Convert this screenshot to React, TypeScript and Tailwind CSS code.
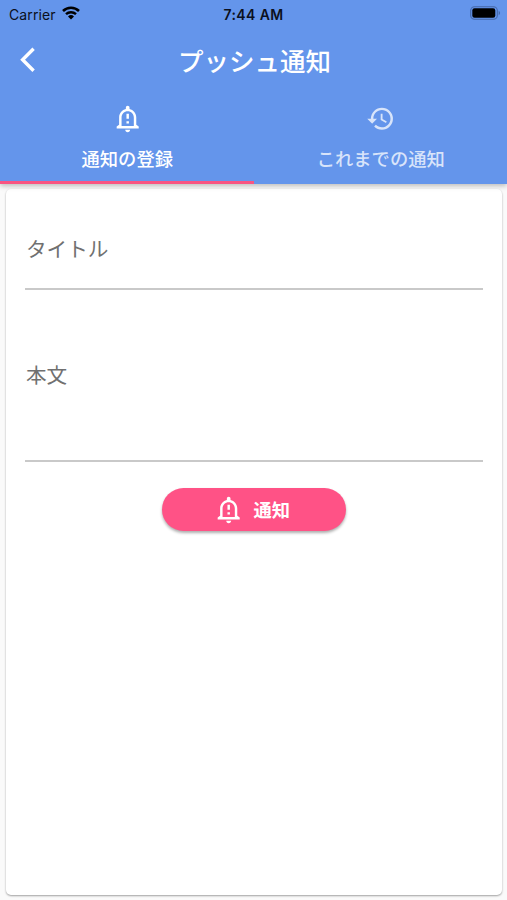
function BellAlertIcon() {
  return (
    <svg viewBox="0 0 24 24" className="size-[29.4px] shrink-0" fill="currentColor">
      <path
        fillRule="evenodd"
        d="M12 23c1.1 0 1.99-.89 1.99-1.99h-3.98c0 1.1.89 1.99 1.99 1.99zM19 17v-6c0-3.35-2.36-6.15-5.5-6.83V3c0-.83-.67-1.5-1.5-1.5s-1.5.67-1.5 1.5v1.17C7.36 4.85 5 7.65 5 11v6l-2 1.4V20h18v-1.6zM17 18H7v-7c0-2.76 2.24-5 5-5s5 2.24 5 5zM11 8h2v4h-2zM11 14h2v2h-2z"
      />
    </svg>
  );
}

function HistoryIcon() {
  return (
    <svg viewBox="0 0 24 24" className="size-[29.4px] shrink-0" fill="currentColor">
      <path d="M13 3a9 9 0 0 0-9 9H1l3.89 3.89.07.14L9 12H6c0-3.87 3.13-7 7-7s7 3.13 7 7-3.13 7-7 7c-1.93 0-3.68-.79-4.94-2.06l-1.42 1.42A8.954 8.954 0 0 0 13 21a9 9 0 0 0 0-18zm-1 5v5l4.28 2.54.72-1.21-3.5-2.08V8H12z" />
    </svg>
  );
}

function StatusBar() {
  return (
    <div className="grid h-7 grid-cols-3 items-center pl-[9px] pr-[6px] font-[Inter,sans-serif] text-[14px] text-[#0b1020]">
      <div className="flex items-center gap-[6px]">
        <span className="tracking-[0.1px]">Carrier</span>
        <svg viewBox="0 0 18 14" className="-mt-[2px] h-[14px] w-[18px]" fill="none" stroke="black">
          <path d="M1 5a11.5 11.5 0 0 1 16 0" strokeWidth="2.6" />
          <path d="M4 8.2a7.2 7.2 0 0 1 10 0" strokeWidth="2.4" />
          <path d="M9 13.4 6 10.5a4.3 4.3 0 0 1 6 0z" fill="black" stroke="none" />
        </svg>
      </div>
      <div className="-ml-[3px] text-center font-semibold tracking-[0.4px]">7:44 AM</div>
      <svg viewBox="0 0 31 14" className="-mt-[2px] h-[14px] w-[31px] justify-self-end">
        <rect x="0.7" y="0.7" width="26.6" height="12.6" rx="3.8" fill="none" stroke="#4467a8" strokeWidth="1.1" />
        <rect x="2.3" y="2.3" width="23" height="9.4" rx="2.2" fill="black" />
        <path d="M28.7 4.8c1.8.7 1.8 3.7 0 4.4z" fill="#4467a8" />
      </svg>
    </div>
  );
}

function Header() {
  return (
    <header className="relative z-10 h-[184px] bg-[#6495eb] text-white shadow-[0_2px_5px_rgba(0,0,0,0.25)]">
      <StatusBar />
      <div className="grid h-[66px] grid-cols-[60px_1fr_60px] items-center">
        <svg viewBox="0 0 16 26" className="-mt-[2px] ml-5 h-[26px] w-4" fill="none" stroke="currentColor" strokeWidth="3.4">
          <path d="M13.6 1.7 2.6 12.7l11 11" />
        </svg>
        <h1 className="-mt-[2px] pl-[2px] text-center text-[25.5px] leading-none font-medium">プッシュ通知</h1>
      </div>
      <div className="grid h-[90px] grid-cols-2 text-[18.3px] font-medium">
        <div className="flex flex-col items-center border-b-[3px] border-[#f85482] pt-[10px] pl-px">
          <BellAlertIcon />
          <span className="mt-[10.6px] leading-[28px]">通知の登録</span>
        </div>
        <div className="flex flex-col items-center pt-[10px] pl-px text-white/75">
          <HistoryIcon />
          <span className="mt-[10.6px] leading-[28px]">これまでの通知</span>
        </div>
      </div>
    </header>
  );
}

export default function App() {
  return (
    <div className="flex h-[900px] w-full flex-col bg-[#fafafa] font-['Noto_Sans_CJK_JP',sans-serif]">
      <Header />
      <main className="mr-[5px] mb-[5px] ml-[6px] mt-[5px] flex flex-1 flex-col items-center rounded-[5px] bg-white px-[19px] shadow-[0_1px_2px_rgba(0,0,0,0.36)]">
        <div className="h-[101px] w-full border-b-2 border-[#c9c9c9] pt-[44px] pl-px text-[20.6px] leading-[30px] text-[#707070]">
          タイトル
        </div>
        <div className="h-[172px] w-full border-b-2 border-[#c9c9c9] pt-[69px] pl-px text-[20.6px] leading-[30px] text-[#707070]">
          本文
        </div>
        <button className="mt-[26px] flex h-[43px] w-[184px] items-center justify-center gap-[10px] rounded-full bg-[#ff5286] pr-1 text-[18.3px] font-bold text-white shadow-[0_2px_3px_rgba(0,0,0,0.32)]">
          <BellAlertIcon />
          <span>通知</span>
        </button>
      </main>
    </div>
  );
}
